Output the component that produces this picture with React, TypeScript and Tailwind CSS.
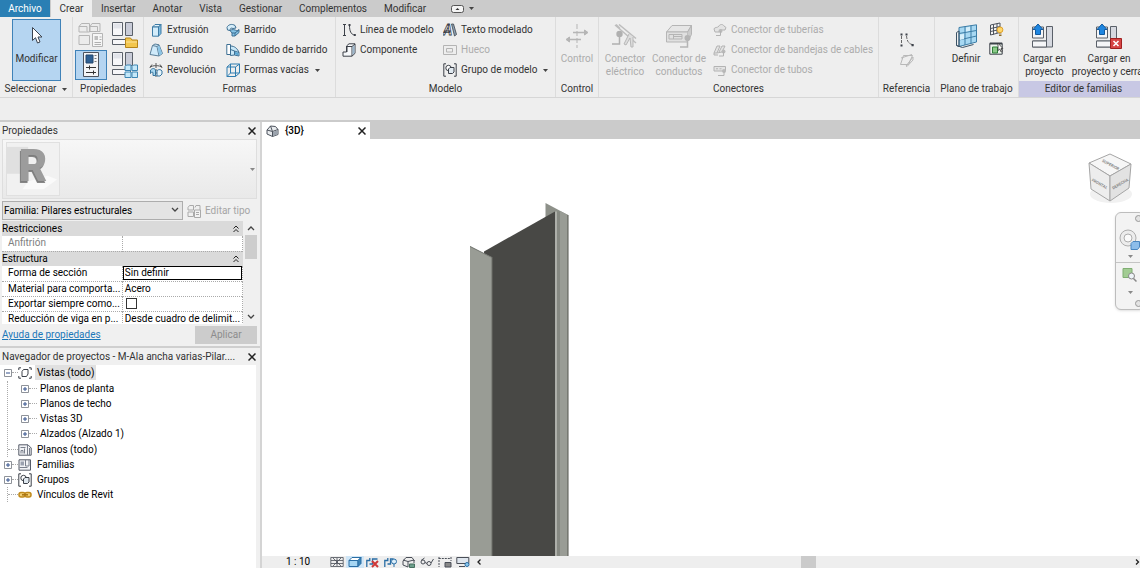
import React, { useState } from 'react';
import clsx from 'clsx';

type IconProps = { w: number; h: number; className?: string; children: React.ReactNode };

const Svg = ({ w, h, className, children }: IconProps) => (
  <svg
    width={w}
    height={h}
    viewBox={`0 0 ${w} ${h}`}
    fill="none"
    stroke="#4a4f58"
    aria-hidden="true"
    className={clsx('shrink-0', className)}
  >
    {children}
  </svg>
);

/* ---------- ribbon icons, 14px ---------- */

const ExtrusionIcon = () => (
  <Svg w={14} h={14}>
    <path d="M3.500 4 6 1.500h6L9.500 4z" fill="#e3f3fc" stroke="#3d7ba5" />
    <path d="M3.500 4h6v9.200h-6z" fill="#d3ecfa" stroke="#3d7ba5" />
    <path d="M9.500 4 12 1.500v9L9.500 13.200z" fill="#7fbbe0" stroke="#3d7ba5" />
  </Svg>
);

const BlendIcon = () => (
  <Svg w={14} h={14}>
    <path d="M3.500 2.500 6 1l4 .8 3.500 8.700L10 13 1 11.500z" fill="#cfeafa" stroke="#5b7f99" />
    <path d="M3.500 2.500 8 3.500 10 2M8 3.500 10 13" stroke="#5b7f99" />
    <path d="M8.500 4 10.300 2.500 13 10.500 10.300 12.500z" fill="#8cc5e6" stroke="none" />
  </Svg>
);

const RevolveIcon = () => (
  <Svg w={14} h={14}>
    <path d="M1 4.500C3 2 11 2 13 4.500M3 1.500.8 4.500M11 1.500l2.200 3" stroke="#555" />
    <path d="M7 0v14" stroke="#555" strokeDasharray="2 1" />
    <path d="M1.500 7c2-2 4-2 5 0v5.500H4V9.500c-1-.8-2.500 0-2.500 1z" fill="#a9d8f1" stroke="#35739d" />
    <path d="M8 7.500c2-1.500 4-1 5 .5v3l-2 2H8z" fill="#e6f4fb" stroke="#35739d" />
  </Svg>
);

const SweepIcon = () => (
  <Svg w={14} h={14}>
    <path d="M1 4.500C2 1.500 6 .5 9 2.500l1 2.500-3 .5C5 4.500 4 5.500 4 7.500L1.500 7z" fill="#d7eefa" stroke="#3d6f93" />
    <path d="M4 7.500c2-1.500 5-1 7 .5l2-1.500v3l-4 3.500H6V10z" fill="#86c3e6" stroke="#3d6f93" />
    <path d="M6 10h3v3M9 10l4-3" stroke="#3d6f93" />
  </Svg>
);

const SweptBlendIcon = () => (
  <Svg w={14} h={14}>
    <path d="M.8 1.500h3.700v10H.8z" fill="#fff" stroke="#3d6f93" />
    <path d="M4.500 3c4 0 7 2.500 8.500 6.500v3.500L8.500 12l-4 .5z" fill="#c9e8f8" stroke="#3d6f93" />
    <path d="M8.500 8 13 9.500M8.500 8v4M4.500 6.500l4 1.500" stroke="#3d6f93" />
    <path d="M9 8.800 12.500 10v2.300L9 11.500z" fill="#58a5d2" stroke="none" />
  </Svg>
);

const VoidIcon = () => (
  <Svg w={14} h={14}>
    <path d="M1 4h8.500v9.500H1zM1 4l3.500-3h9v9l-4 3.500M9.500 4l4-3M4.500 1v9M4.500 10h9M1 13.500 4.500 10" stroke="#2f7db0" />
  </Svg>
);

const ModelLineIcon = () => (
  <Svg w={14} h={14}>
    <path d="M2.500 2v10M1 1.500h3M1 12.500h3M7.500 2.500C7.500 8 9 11.500 12.500 12" stroke="#3c4149" />
    <path d="M6.500 1h2v2h-2zM11.800 11h2v2h-2z" fill="#3c4149" stroke="none" />
  </Svg>
);

const ComponentIcon = () => (
  <Svg w={14} h={14}>
    <path d="M4.500 3 7 .8h6v9.500L10 13.200H1V9h3.500z" fill="#f7f9fb" stroke="#3c4149" />
    <path d="M10 3.500h-5M10 3.500v9.500M10 3.500 13 1M5 3.500V9" stroke="#3c4149" />
    <path d="M10.500 4 12.500 2v8l-2 2z" fill="#9cb7cd" stroke="none" />
  </Svg>
);

// solid block letter: white front face, shaded right side
const ModelTextIcon = () => (
  <Svg w={14} h={14}>
    <path d="M8.500 1h2l3 10.500L11.500 13z" fill="#8fa3b5" stroke="#3c4149" strokeWidth=".8" />
    <text x="0" y="12" fontSize="14" fontWeight="700" fontStyle="italic" fill="#fff" stroke="#3c4149" strokeWidth=".8">A</text>
  </Svg>
);

const OpeningIcon = () => (
  <Svg w={14} h={14}>
    <path d="M.5 2.500h13v9H.5zM3.500 5.500h6v3.500h-6z" stroke="#b4b4b4" />
  </Svg>
);

const BracketGroupIcon = () => (
  <Svg w={14} h={14}>
    <path d="M3 .8H.8v12.400H3M11 .8h2.200v12.400H11" stroke="#3c4149" />
    <circle cx="5.500" cy="5" r="2.700" fill="#fff" stroke="#3c4149" />
    <path d="M5.500 6 7 4.500h4V9l-1.500 1.500h-4z" fill="#dfe8ef" stroke="#3c4149" />
  </Svg>
);

const PipeIcon = () => (
  <Svg w={14} h={14} className="opacity-60">
    <path d="M1 6c0-2 4-1 5-3s4-2 5 0l2 1.500-1 2.500H7l-1 2H2z" fill="#ddd" stroke="#8c8c8c" />
    <circle cx="7.500" cy="8" r="2" fill="#999" stroke="none" />
    <path d="M7.500 8v4.500H3" stroke="#8c8c8c" />
  </Svg>
);

const TrayIcon = () => (
  <Svg w={14} h={14} className="opacity-60">
    <path d="m1 10 3-7h3L4 10zM6 9l3-6h3L9 9M1 10v2h4M4 10l5-1" fill="#ddd" stroke="#8c8c8c" />
    <circle cx="10.500" cy="8.500" r="2" fill="#999" stroke="none" />
    <path d="M10.500 8.500v4.500H6" stroke="#8c8c8c" />
  </Svg>
);

const ConduitIcon = () => (
  <Svg w={14} h={14} className="opacity-60">
    <path d="M1 3.500h11.500v4.500H1zM3 5.800h2M6.500 5.800h2" fill="#ddd" stroke="#8c8c8c" />
    <circle cx="11" cy="8" r="2" fill="#999" stroke="none" />
    <path d="M11 8v4.500H5" stroke="#8c8c8c" />
  </Svg>
);

/* ---------- properties panel icons ---------- */

const CategoryIcon = () => (
  <Svg w={28} h={28}>
    <g fill="#ececec" stroke="#b5b5b5">
      <path d="M2 5.500 4.500 2.500h8v8.500H2zM13 5.500 15 2.500h8v8H13zM2 14.500h10.500v9H2z" />
      <path d="M2 5.500h8v5.500M13 5.500h7.500v5" />
      <path d="M15.500 12.500h10v13h-10z" fill="#f6f6f6" />
    </g>
    <path d="M17.500 15h3.500v4h-3.500z" fill="#bdbdbd" stroke="none" />
    <path d="M22.500 16h2M22.500 18.500h2M17.500 21.500h6.500M17.500 23.500h6.500" stroke="#b0b0b0" />
  </Svg>
);

const SheetBlocks = () => (
  <>
    <path d="M1.500 1.500h10v13h-10zM1.500 18.500h18v5h-18z" fill="#f7f7f9" stroke="#5a6069" />
    <path d="M14.500 1.500h7v13h-7z" fill="#c9ccd8" stroke="#5a6069" />
    <path d="M2.500 2.500h8v5h-8z" fill="#e2e4ea" stroke="none" />
  </>
);

const TypeFolderIcon = () => (
  <Svg w={28} h={28}>
    <SheetBlocks />
    <path d="M14.500 17h5l1.500 2h5.500v7.500h-12z" fill="#f3c64d" stroke="#b5841a" />
    <path d="M15 21h11" stroke="#fbe29a" />
  </Svg>
);

const FamilyTypesIcon = () => (
  <Svg w={28} h={28}>
    <SheetBlocks />
    <g fill="#c5e8f9" stroke="#3d86b4">
      <path d="M14 15.500 15.500 14h4.500v5.500h-6zM21 15.500 22.500 14h4v5.500H21zM14 21h6v5.500h-6zM21 21h5.500v5.500H21z" />
    </g>
  </Svg>
);

const PropertiesIcon = () => (
  <Svg w={28} h={28}>
    <path d="M6.500 1.500h15v24h-15z" fill="#f4f5f7" stroke="#4c525c" />
    <path d="M9 4h7v8H9z" fill="#2d5f93" stroke="#24496e" />
    <path d="M17.500 4.500h2M17.500 7.500h2M17.500 10.500h2" stroke="#777" />
    <path d="M9 16.500h10M9 21.500h10M12.500 14.500v4M16.500 19.500v4" stroke="#333" />
  </Svg>
);

const CursorIcon = () => (
  <Svg w={12} h={18}>
    <path d="M1.500 1.500v13l3-2.800 2 5.300 2.500-1-2-5h4z" fill="#fff" stroke="#3b4450" />
  </Svg>
);

/* ---------- large icons, 24px high ---------- */

const ControlIcon = () => (
  <Svg w={24} h={24}>
    <path d="M12 0v24" stroke="#b5b5b5" strokeDasharray="5 2" />
    <path d="M8 8.500h13M3 15.500h13" stroke="#b5b5b5" strokeWidth="1.500" />
    <path d="m19.500 6 3.500 2.500-3.500 2.500zM4.500 13 1 15.500 4.500 18z" fill="#b5b5b5" stroke="#b5b5b5" />
  </Svg>
);

const ElectricIcon = () => (
  <Svg w={28} h={24}>
    <path d="M4 1 25 19M8 .5l17 14M5 .5l4 4" stroke="#bdbdbd" strokeWidth="1.500" />
    <path d="m18 10-5 10 2 1 4-7 1 9h2V13" fill="#ddd" stroke="#b8b8b8" />
    <circle cx="8.500" cy="10" r="3.200" fill="#b0b0b0" stroke="none" />
    <path d="M8.500 10v10H1" stroke="#b0b0b0" strokeWidth="1.500" />
  </Svg>
);

const DuctIcon = () => (
  <Svg w={28} h={24}>
    <path d="M1.500 8 7 1.500h19.500l-4 6.500z" fill="#e6e6e6" stroke="#b5b5b5" />
    <path d="M1.500 8h21v10h-21zM4 10.500h13V15H4zM8.500 12.500H17M8.500 10.500V15" fill="#e0e0e0" stroke="#b5b5b5" />
    <path d="m22.500 8 4-6.500v9l-4 7" fill="#ccc" stroke="#b5b5b5" />
    <circle cx="22.500" cy="14" r="3" fill="#b5b5b5" stroke="none" />
    <path d="M22.500 14v9H15" stroke="#b5b5b5" strokeWidth="1.500" />
  </Svg>
);

const WorkPlaneIcon = () => (
  <Svg w={24} h={24}>
    <path d="M5 3.500 22.500.8V18L5 22.500z" fill="#a7d8f2" stroke="#3c7da6" />
    <path d="M11 2.500V21M17 1.500V19.500M5 9.500l17.500-3M5 16l17.500-4" stroke="#3c7da6" />
    <path d="M6 10.500 10 10v5l-4 1zM12 3.500l4-.7v4l-4 .8z" fill="#d7effa" stroke="none" />
    <path d="M2.500 8.500 5 7v15.500l-2.500-1zM2.500 21.500l6 2 11-3" stroke="#3c5366" />
  </Svg>
);

const ShowPlaneIcon = () => (
  <Svg w={15} h={15}>
    <path d="M1.500 3 11 1v9.500l-9.500 2.500zM4.500 2.500v10M8 1.500v9.500M1.500 6.500 11 4.500M1.500 9.500 11 7.500" fill="#f5f5f5" stroke="#4c525c" />
    <circle cx="11" cy="7.800" r="2.900" fill="#ffd76a" stroke="#dfa02a" />
    <path d="M10 12h2.500M10 13.500h2.500" stroke="#8a6a2a" />
  </Svg>
);

const ViewerIcon = () => (
  <Svg w={15} h={15}>
    <path d="M.8 2.500h12.400v10.700H.8z" fill="#eef5ee" stroke="#3c4149" />
    <path d="M.8 2.500h12.400" stroke="#3c4149" strokeWidth="2" />
    <path d="M3.500 6h5v6h-5z" fill="#8ccb89" stroke="#2f7f38" />
    <path d="m9 2 0 7.500 1.800-1.500 1.300 3 1.200-.7-1.300-2.800h1.800z" fill="#fff" stroke="#333" strokeWidth=".8" />
  </Svg>
);

const LoadIcon = ({ close = false }: { close?: boolean }) => (
  <Svg w={28} h={26}>
    <path d="M15.500 3.500h6V24h-20v-6h14z" fill="#d6d9e0" stroke="#5a6069" />
    <path d="M1.500 4h11v11h-11zM1.500 18h14v6h-14z" fill="#f5f6f8" stroke="#5a6069" />
    <path d="M7 1l5 5.500H9.500v5h-5v-5H2z" fill="#1f86e0" stroke="#125a9f" />
    {close && (
      <>
        <path d="M15.500 15.500h11v10h-11z" fill="#d64545" stroke="#a02020" />
        <path d="m18.500 18 5 5M23.500 18l-5 5" stroke="#fff" strokeWidth="1.500" />
      </>
    )}
  </Svg>
);

const RefLineIcon = () => (
  <Svg w={16} h={14}>
    <path d="M2.500 3v8M7.500 3C8 8 9.500 10.500 13 11.500" stroke="#666" strokeDasharray="3 1" />
    <path d="M1.500.5h2v2h-2zM1.500 11.500h2v2h-2zM6.500.5h2v2h-2zM12.500 11h2.200v2.200h-2.200z" fill="#3c4149" stroke="none" />
  </Svg>
);

const RefPlaneIcon = () => (
  <Svg w={16} h={14}>
    <path d="M4.500 2.500h9l-4 9h-8zM2 5 13 1.500M7 13l7-9v3l-6 6.500z" stroke="#b8b8b8" />
  </Svg>
);

/* ---------- ribbon building blocks ---------- */

const RibbonGroup = ({ title, width, highlight, children }: {
  title: React.ReactNode;
  width: string;
  highlight?: boolean;
  children: React.ReactNode;
}) => (
  <section className={clsx('flex shrink-0 flex-col border-r border-[#dcdcdc]', width)}>
    <div className="flex h-16 items-start">{children}</div>
    <h2 className={clsx('flex h-4 items-center justify-center whitespace-nowrap', highlight && 'bg-[#c8c8e4]')}>
      {title}
    </h2>
  </section>
);

const SmallButton = ({ icon, label, menu, disabled }: {
  icon: React.ReactNode;
  label: string;
  menu?: boolean;
  disabled?: boolean;
}) => (
  <button
    type="button"
    disabled={disabled}
    className="flex h-5 items-center gap-1 whitespace-nowrap disabled:text-[#acacac]"
  >
    {icon}
    {label}
    {menu && <Caret className="ml-0.5" />}
  </button>
);

const LargeButton = ({ icon, lines, width, disabled }: {
  icon: React.ReactNode;
  lines: string[];
  width: string;
  disabled?: boolean;
}) => (
  <button
    type="button"
    disabled={disabled}
    className={clsx('flex shrink-0 flex-col items-center pt-1.5 leading-[13px] whitespace-nowrap disabled:text-[#acacac]', width)}
  >
    <span className="mb-1 flex h-[25px] items-center">{icon}</span>
    {lines.map((line) => (
      <span key={line}>{line}</span>
    ))}
  </button>
);

const Caret = ({ className }: { className?: string }) => (
  <svg width="5" height="3" viewBox="0 0 5 3" className={className} aria-hidden="true">
    <path d="M0 0h5L2.500 3z" fill="#444" />
  </svg>
);

const CloseIcon = () => (
  <Svg w={8} h={8}>
    <path d="m.5.5 7 7M7.500.5l-7 7" stroke="#222" strokeWidth="1.500" />
  </Svg>
);

const TABS = ['Insertar', 'Anotar', 'Vista', 'Gestionar', 'Complementos', 'Modificar'];

const TabStrip = () => (
  <nav className="flex h-[17px] shrink-0 items-stretch gap-px bg-[#cbcbcb]">
    <button type="button" className="w-[50px] bg-[#2a7fb4] text-white">Archivo</button>
    <button type="button" className="w-[41px] bg-[#eee]">Crear</button>
    {TABS.map((tab) => (
      <button type="button" key={tab} className="px-2">{tab}</button>
    ))}
    <button type="button" aria-label="Minimizar cinta" className="ml-4 flex items-center gap-1">
      <Svg w={14} h={8}>
        <rect x=".5" y=".5" width="12" height="7" rx="2" fill="#f4f4f4" stroke="#555" />
        <path d="M4.500 5 6.500 3l2 2z" fill="#333" stroke="none" />
      </Svg>
      <Caret />
    </button>
  </nav>
);

const Ribbon = () => (
  <div className="flex shrink-0 overflow-hidden border-b border-[#d6d6d6]">
    <RibbonGroup width="w-[73px]" title={<>Seleccionar<Caret className="ml-1.5" /></>}>
      <button
        type="button"
        className="mt-0.5 ml-3 flex h-[62px] w-[49px] flex-col items-center border border-[#3f82b8] bg-[#b5d5f1] pt-1.5"
      >
        <CursorIcon />
        <span className="mt-2">Modificar</span>
      </button>
    </RibbonGroup>

    <RibbonGroup width="w-[71px]" title="Propiedades">
      <div className="grid grid-cols-2 gap-x-0.5 px-0.5 pt-0.5">
        <button type="button" disabled aria-label="Categoría y parámetros" className="flex h-[31px] w-8 items-center justify-center"><CategoryIcon /></button>
        <button type="button" aria-label="Tipo de familia" className="flex h-[31px] w-8 items-center justify-center"><TypeFolderIcon /></button>
        <button type="button" aria-label="Propiedades" className="flex h-[30px] w-8 items-center justify-center border border-[#3f82b8] bg-[#b5d5f1]"><PropertiesIcon /></button>
        <button type="button" aria-label="Tipos de familia" className="flex h-[30px] w-8 items-center justify-center"><FamilyTypesIcon /></button>
      </div>
    </RibbonGroup>

    <RibbonGroup width="w-[192px]" title="Formas">
      <div className="w-[76px] pt-[3px] pl-[5px]">
        <SmallButton icon={<ExtrusionIcon />} label="Extrusión" />
        <SmallButton icon={<BlendIcon />} label="Fundido" />
        <SmallButton icon={<RevolveIcon />} label="Revolución" />
      </div>
      <div className="pt-[3px] pl-1.5">
        <SmallButton icon={<SweepIcon />} label="Barrido" />
        <SmallButton icon={<SweptBlendIcon />} label="Fundido de barrido" />
        <SmallButton icon={<VoidIcon />} label="Formas vacías" menu />
      </div>
    </RibbonGroup>

    <RibbonGroup width="w-[220px]" title="Modelo">
      <div className="w-[101px] pt-[3px] pl-1.5">
        <SmallButton icon={<ModelLineIcon />} label="Línea de modelo" />
        <SmallButton icon={<ComponentIcon />} label="Componente" />
      </div>
      <div className="pt-[3px] pl-1.5">
        <SmallButton icon={<ModelTextIcon />} label="Texto modelado" />
        <SmallButton icon={<OpeningIcon />} label="Hueco" disabled />
        <SmallButton icon={<BracketGroupIcon />} label="Grupo de modelo" menu />
      </div>
    </RibbonGroup>

    <RibbonGroup width="w-[43px]" title="Control">
      <LargeButton width="w-[42px]" icon={<ControlIcon />} lines={['Control']} disabled />
    </RibbonGroup>

    <RibbonGroup width="w-[280px]" title="Conectores">
      <LargeButton width="w-[52px]" icon={<ElectricIcon />} lines={['Conector', 'eléctrico']} disabled />
      <LargeButton width="w-[56px]" icon={<DuctIcon />} lines={['Conector de', 'conductos']} disabled />
      <div className="pt-[3px] pl-1.5">
        <SmallButton icon={<PipeIcon />} label="Conector de tuberías" disabled />
        <SmallButton icon={<TrayIcon />} label="Conector de bandejas de cables" disabled />
        <SmallButton icon={<ConduitIcon />} label="Conector de tubos" disabled />
      </div>
    </RibbonGroup>

    <RibbonGroup width="w-14" title="Referencia">
      <div className="flex w-full flex-col items-center gap-1.5 pt-4">
        <button type="button" aria-label="Línea de referencia"><RefLineIcon /></button>
        <button type="button" aria-label="Plano de referencia"><RefPlaneIcon /></button>
      </div>
    </RibbonGroup>

    <RibbonGroup width="w-[84px]" title="Plano de trabajo">
      <LargeButton width="w-[46px] ml-2" icon={<WorkPlaneIcon />} lines={['Definir']} />
      <div className="flex flex-col gap-1 pt-[5px]">
        <button type="button" aria-label="Mostrar"><ShowPlaneIcon /></button>
        <button type="button" aria-label="Visor"><ViewerIcon /></button>
      </div>
    </RibbonGroup>

    <RibbonGroup width="w-[130px]" title="Editor de familias" highlight>
      <LargeButton width="w-[51px]" icon={<LoadIcon />} lines={['Cargar en', 'proyecto']} />
      <LargeButton width="w-[78px]" icon={<LoadIcon close />} lines={['Cargar en', 'proyecto y cerrar']} />
    </RibbonGroup>
  </div>
);

/* ---------- properties palette ---------- */

const DoubleChevron = () => (
  <Svg w={6} h={8}>
    <path d="m.5 3.500 2.500-2.500 2.500 2.500M.5 7 3 4.500 5.500 7" stroke="#222" />
  </Svg>
);

const Chevron = ({ up }: { up?: boolean }) => (
  <Svg w={8} h={6} className={up ? 'rotate-180' : undefined}>
    <path d="m1 1 3 3 3-3" stroke="#444" strokeWidth="1.300" />
  </Svg>
);

const SectionRow = ({ title }: { title: string }) => (
  <tr className="h-[15px] bg-[#dadada]">
    <th colSpan={2} className="p-0 pr-1 text-left font-normal">
      <div className="flex items-center justify-between">{title}<DoubleChevron /></div>
    </th>
  </tr>
);

const ParamRow = ({ name, muted, children }: { name: string; muted?: boolean; children?: React.ReactNode }) => (
  <tr className="h-[15px] border-b border-dotted border-[#aaa]">
    <th scope="row" className={clsx('border-r border-dotted border-[#aaa] p-0 pl-1.5 text-left font-normal whitespace-nowrap', muted && 'text-[#808080]')}>
      {name}
    </th>
    <td className="border-r border-dotted border-[#aaa] p-0 whitespace-nowrap">{children}</td>
  </tr>
);

const PropertiesPalette = () => {
  const [shape, setShape] = useState('Sin definir');
  const [exported, setExported] = useState(false);

  return (
    <section className="shrink-0 pr-[3px] pl-0.5 text-black">
      <header className="flex h-[17px] items-center justify-between pr-px text-[#333]">
        <h2>Propiedades</h2>
        <button type="button" aria-label="Cerrar propiedades"><CloseIcon /></button>
      </header>

      <div className="flex h-[60px] items-center justify-between border border-[#dedede] bg-linear-to-b from-[#f7f7f7] to-[#e9e9e9] pr-px pl-[3px]">
        <svg width="54" height="54" viewBox="0 0 54 54" className="border border-[#e0e0e0]" aria-hidden="true">
          <rect width="54" height="54" fill="#f1f1f1" />
          <path d="M0 4h22v28H0z" fill="#e0e0e0" />
          <path d="m22 40 20-6 10 4-14 10H16z" fill="#fafafa" />
          <text x="12" y="39" fontSize="46" fontWeight="900" fill="#9c9c9c" className="drop-shadow-[-1px_2px_0_#7d7d7d]">R</text>
        </svg>
        <Caret className="opacity-60" />
      </div>

      <div className="mt-0.5 flex h-[19px] items-center">
        <div className="relative w-[181px]">
          <select
            aria-label="Familia"
            className="h-[19px] w-full appearance-none border border-[#adadad] bg-[#e4e4e4] pl-px outline-none"
          >
            <option>Familia: Pilares estructurales</option>
          </select>
          <span className="pointer-events-none absolute top-1.5 right-1"><Chevron /></span>
        </div>
        <button type="button" disabled className="ml-1 flex items-center gap-1 text-[#a5a5a5]">
          <Svg w={14} h={14}>
            <path d="M1 3.500 2.500 1.500h4v4.500H1zM8 3.500 9 1.500h4V6M1 8h5.500v4.500H1z" stroke="#aaa" />
            <path d="M7.500 6h6v7.500h-6zM9 8.500h3M9 10.500h3" fill="#f3f3f3" stroke="#aaa" />
          </Svg>
          Editar tipo
        </button>
      </div>

      <div className="mt-px flex h-[103px]">
        <div className="w-[242px] overflow-hidden bg-white">
          <table className="w-full table-fixed border-collapse leading-[14px]">
            <tbody>
              <SectionRow title="Restricciones" />
              <ParamRow name="Anfitrión" muted />
              <SectionRow title="Estructura" />
              <ParamRow name="Forma de sección">
                <input
                  type="text"
                  aria-label="Forma de sección"
                  value={shape}
                  onChange={(e) => setShape(e.target.value)}
                  className="block h-[14px] w-full border border-black px-px outline-none"
                />
              </ParamRow>
              <ParamRow name="Material para comporta..."><span className="pl-0.5">Acero</span></ParamRow>
              <ParamRow name="Exportar siempre como...">
                <input
                  type="checkbox"
                  aria-label="Exportar siempre como"
                  checked={exported}
                  onChange={(e) => setExported(e.target.checked)}
                  className="ml-[3px] block size-[11px] appearance-none border border-[#333] bg-white checked:bg-[#333]"
                />
              </ParamRow>
              <ParamRow name="Reducción de viga en p..."><span className="pl-0.5">Desde cuadro de delimit...</span></ParamRow>
            </tbody>
          </table>
        </div>
        <div className="ml-0.5 flex w-3 flex-col items-center justify-between py-1">
          <Chevron up />
          <div className="mt-1 mb-auto h-6 w-full bg-[#cdcdcd]" />
          <Chevron />
        </div>
      </div>

      <footer className="flex h-[22px] items-center justify-between">
        <a href="#ayuda" className="text-[#1a76b8] underline">Ayuda de propiedades</a>
        <button type="button" disabled className="h-[18px] w-[62px] bg-[#ccc] text-[#8c8c8c]">Aplicar</button>
      </footer>
    </section>
  );
};

/* ---------- project browser ---------- */

const Toggle = ({ open }: { open?: boolean }) => (
  <Svg w={8} h={8}>
    <path d="M.5.5h7v7h-7z" fill="#fff" stroke="#8e9299" />
    <path d={open ? 'M2 4h4' : 'M2 4h4M4 2v4'} stroke="#33508c" />
  </Svg>
);

const Branch = ({ width }: { width: string }) => <span className={clsx('border-t border-dotted border-[#aaa]', width)} />;

const ViewsIcon = () => (
  <Svg w={14} h={12}>
    <path d="M3 .8H.8V3M.8 9v2.200H3M11 .8h2.200V3M13.200 9v2.200H11M4 4.500 5.500 2.500h4.500V7L8.500 9.500H4z" stroke="#3c4149" />
  </Svg>
);

const SheetsIcon = () => (
  <Svg w={14} h={12}>
    <path d="M.8.8H10L13.200 4v7.200H.8z" fill="#f2f3f6" stroke="#565c68" />
    <path d="M2.500 3.500h5M3 9.500V6.500h2v3M6.500 9.500v-5M9.500 1v10M11.500 4v7" stroke="#7a808c" />
  </Svg>
);

const FamiliesIcon = () => (
  <Svg w={14} h={12}>
    <path d="M1 .8h11.500v10.400H1z" fill="#f2f3f6" stroke="#565c68" />
    <path d="M7.500 1v6H11V1M1.500 8.500h8" stroke="#7a808c" />
    <path d="M2.500 2.500h3.500v4H2.500z" fill="#9aa0ae" stroke="none" />
  </Svg>
);

const LinkIcon = () => (
  <Svg w={14} h={8}>
    <rect x="1" y="1.500" width="6" height="4.500" rx="2" fill="#f0cf75" stroke="#c08a1c" strokeWidth="1.500" />
    <rect x="7" y="1.500" width="6" height="4.500" rx="2" fill="#f0cf75" stroke="#c08a1c" strokeWidth="1.500" />
    <path d="M4 3.800h6" stroke="#a87412" strokeWidth="1.500" />
  </Svg>
);

const VIEW_FOLDERS = ['Planos de planta', 'Planos de techo', 'Vistas 3D', 'Alzados (Alzado 1)'];

const ROOT_NODES = [
  { label: 'Planos (todo)', icon: <SheetsIcon />, expandable: false },
  { label: 'Familias', icon: <FamiliesIcon />, expandable: true },
  { label: 'Grupos', icon: <BracketGroupIcon />, expandable: true },
  { label: 'Vínculos de Revit', icon: <LinkIcon />, expandable: false },
];

const TreeRow = ({ children }: { children: React.ReactNode }) => (
  <div className="flex h-[15px] items-center whitespace-nowrap">{children}</div>
);

const ProjectBrowser = () => (
  <section className="flex min-h-0 flex-1 flex-col border-t-2 border-[#cfcfcf] pr-1 text-black">
    <header className="flex h-[17px] shrink-0 items-center justify-between pl-0.5 text-[#333]">
      <h2 className="whitespace-nowrap">Navegador de proyectos - M-Ala ancha varias-Pilar....</h2>
      <button type="button" aria-label="Cerrar navegador"><CloseIcon /></button>
    </header>
    <ul className="min-h-0 flex-1 overflow-hidden bg-white pl-1">
      <li>
        <TreeRow>
          <Toggle open />
          <Branch width="w-1.5" />
          <ViewsIcon />
          <span className="ml-[3px] bg-[#e0e0e0] px-0.5 leading-[15px]">Vistas (todo)</span>
        </TreeRow>
        <ul className="my-px ml-[3px] border-l border-dotted border-[#aaa] pl-[13px]">
          {VIEW_FOLDERS.map((folder) => (
            <li key={folder}>
              <TreeRow>
                <Toggle />
                <Branch width="w-2" />
                <span className="pl-[3px]">{folder}</span>
              </TreeRow>
            </li>
          ))}
        </ul>
      </li>
      {ROOT_NODES.map((node) => (
        <li key={node.label}>
          <TreeRow>
            {node.expandable ? (
              <><Toggle /><Branch width="w-1.5" /></>
            ) : (
              <span className="ml-[3px] flex w-[11px] items-center self-stretch border-l border-dotted border-[#aaa]"><Branch width="w-full" /></span>
            )}
            {node.icon}
            <span className="ml-[5px]">{node.label}</span>
          </TreeRow>
        </li>
      ))}
    </ul>
  </section>
);

/* ---------- drawing area ---------- */

const HouseIcon = () => (
  <Svg w={13} h={12}>
    <path d="M1 5 4.500 1l5 .5L12 4.500v5L6.500 11.500 1 9z" fill="#e8ebee" stroke="#4c525c" />
    <path d="m1 5 5.500 1.500L12 4.500M6.500 6.500v5M6.500 6.500 4.500 1" stroke="#4c525c" />
    <path d="m7 7 4.500-2v4.500L7 11z" fill="#9ba3ad" stroke="none" />
  </Svg>
);

// H-section column seen in perspective
const SteelColumn = () => (
  <svg width="99" height="353" viewBox="0 0 99 353" className="absolute bottom-0 left-[208px]" aria-label="Pilar" role="img">
    <path d="M75.500 0 98 12v341H75.500z" fill="#8d9089" />
    <path d="M14 48.500 85 8.500V353H14z" fill="#484845" />
    <path d="M85 8.500h2V353h-2z" fill="#adafa9" />
    <path d="M87 8.500h3V353h-3z" fill="#868982" />
    <path d="m90 8 8 4v341h-8z" fill="#999c95" />
    <path d="M98 12v341" stroke="#55564f" />
    <path d="m0 43 22 11.500V353H0z" fill="#999c95" />
    <path d="M22 54v299" stroke="#6c6e69" />
    <path d="m0 43.500 22 11" stroke="#777a74" />
  </svg>
);

const ViewCube = () => (
  <svg width="50" height="54" viewBox="0 0 50 54" className="absolute top-[13px] right-[5px]" role="img" aria-label="ViewCube">
    <ellipse cx="26" cy="42" rx="21" ry="9" fill="#f1f1f1" />
    <path d="m25 2 21 10-21 12L4 11z" fill="#f6f6f6" stroke="#a5a5a5" />
    <path d="M4 11 25 24v25L6 37z" fill="#ededed" stroke="#a5a5a5" />
    <path d="M46 12 25 24v25l19-13z" fill="#e2e2e2" stroke="#a5a5a5" />
    <g fontSize="4" fontWeight="700" fill="#8b8b8b" textAnchor="middle">
      <text transform="translate(14 33) rotate(30)">FRONTAL</text>
      <text transform="translate(36 33) rotate(-30)">DERECHA</text>
      <text transform="translate(25 14) rotate(28)">SUPERIOR</text>
    </g>
  </svg>
);

const NavigationBar = () => (
  <div className="absolute top-[73px] right-[-5px] flex h-[98px] w-[30px] flex-col items-center rounded-md border border-[#bdbdbd] bg-[#f3f3f3] pt-4 shadow-sm">
    <button type="button" aria-label="Rueda de navegación">
      <Svg w={22} h={22}>
        <circle cx="9" cy="9" r="8" fill="#ececec" stroke="#adadad" />
        <circle cx="9" cy="9" r="4" fill="#fafafa" stroke="#adadad" />
        <path d="M12 14.500 14 12.500h6.500v5.500L18.500 20.500H12z" fill="#8dbdea" stroke="#4a86c0" />
      </Svg>
    </button>
    <Caret className="mt-1 opacity-60" />
    <div className="my-1 w-full border-t border-[#c4c4c4]" />
    <button type="button" aria-label="Zoom">
      <Svg w={16} h={16}>
        <path d="M1 1.500h9v9H1z" fill="#a2cc93" stroke="#7fae72" />
        <circle cx="9.500" cy="9" r="3" fill="#eef4f8" stroke="#888" />
        <path d="m11.500 11.500 3 3" stroke="#888" strokeWidth="1.500" />
      </Svg>
    </button>
    <Caret className="mt-2 opacity-60" />
    <span className="absolute top-0.5 right-0.5 size-[7px] rounded-full border border-[#999] bg-[#e3e3e3]" />
    <span className="absolute right-0.5 bottom-0.5 size-[7px] rounded-full border border-[#999] bg-[#e3e3e3]" />
  </div>
);

const VIEW_CONTROLS = [
  { name: 'Nivel de detalle', art: <path d="M.8 1.500h12.400v9H.8zM1 4.500h12M1 7.500h12M3 2l8 8M11 2 3 10M7 2v8" strokeWidth=".8" /> },
  { name: 'Estilo visual', active: true, art: <><path d="m1 4.500 3-3h9l-3 3z" fill="#fff" stroke="#2a6ea5" /><path d="M1 4.500h9v6H1z" fill="#a6d6f3" stroke="#2a6ea5" /><path d="m10 4.500 3-3v6l-3 3z" fill="#3f86b8" stroke="#2a6ea5" /></> },
  { name: 'Camino de sol', art: <><path d="M.8 11V4.500h3V2M3.500 8h3V3h5" stroke="#2a6ea5" strokeWidth="1.300" /><path d="m6 5 6 6M12 5l-6 6" stroke="#cf3838" strokeWidth="2" /></> },
  { name: 'Sombras', art: <><path d="M.8 11V4.500h3V2M3.500 8h3V3h3" stroke="#2a6ea5" strokeWidth="1.300" /><circle cx="10" cy="5.500" r="2.500" fill="#dceefa" stroke="#2a6ea5" /><path d="M10 8v3" stroke="#2a6ea5" /></> },
  { name: 'Bloquear vista', art: <><path d="M1 5 4 1.500h6L12.500 5M1 5v4l5 2V5.500L1 4M6 5.500 12 4v3" fill="#eee" /><path d="M7.500 8h5v3.500h-5z" fill="#6d9f8c" stroke="#47705f" /></> },
  { name: 'Ocultar', art: <><circle cx="3" cy="6" r="2" /><circle cx="9" cy="7.500" r="2" /><path d="M1 4.500 4.500 2M5 6.500l2 1M11 7l2.500-4" /></> },
  { name: 'Cotas', art: <><path d="M1 1v10M.8 2.500h11M13 1v4" strokeDasharray="2 1" /><path d="M7 6.500h6v4.500H7z" fill="#888" /></> },
  { name: 'Restricciones', art: <><path d="M.8 1.500h12v6H.8z" fill="#dfe6ee" /><path d="M3 10.500h6" /><circle cx="11" cy="8.500" r="2" fill="#8cc8ee" stroke="#2a6ea5" /></> },
];

const StatusBar = () => (
  <footer className="flex h-3 shrink-0 items-center overflow-hidden bg-[#eee]">
    <span className="w-[66px] pl-6 whitespace-nowrap text-black">1 : 10</span>
    <div className="flex">
      {VIEW_CONTROLS.map(({ name, active, art }) => (
        <button type="button" key={name} aria-label={name} className={clsx('flex w-[18px] justify-center', active && 'bg-[#cfe6f7]')}>
          <Svg w={14} h={12}>{art}</Svg>
        </button>
      ))}
    </div>
    <Svg w={6} h={8} className="ml-1"><path d="M4.500 1.500 2 4l2.500 2.500" stroke="#222" strokeWidth="1.300" /></Svg>
    <div className="flex h-full flex-1 justify-center">
      <div className="h-full w-[15px] bg-[#cbcbcb]" />
    </div>
    <Svg w={6} h={8}><path d="M2 1.500 4.500 4 2 6.500" stroke="#222" strokeWidth="1.300" /></Svg>
  </footer>
);

const DrawingArea = () => (
  <main className="flex min-w-0 flex-1 flex-col">
    <div className="flex h-[17px] shrink-0 bg-[#cbcbcb]">
      <div className="flex w-[108px] items-center bg-white pr-1 pl-1">
        <HouseIcon />
        <span className="ml-1.5 font-medium text-black">{'{3D}'}</span>
        <button type="button" aria-label="Cerrar vista" className="ml-auto"><CloseIcon /></button>
      </div>
    </div>
    <div className="relative min-h-0 flex-1 overflow-hidden bg-white">
      <SteelColumn />
      <ViewCube />
      <NavigationBar />
    </div>
    <StatusBar />
  </main>
);

export default function App() {
  return (
    <div className="flex h-screen flex-col overflow-hidden bg-[#eee] font-['Roboto','Open_Sans',sans-serif] text-[10px] leading-[14px] text-[#333]">
      <TabStrip />
      <Ribbon />
      <div className="h-6 shrink-0 border-b-2 border-[#cbcbcb]" />
      <div className="flex min-h-0 flex-1">
        <aside className="flex w-[262px] shrink-0 flex-col border-r-2 border-[#d4d4d4] bg-[#f0f0f0]">
          <PropertiesPalette />
          <ProjectBrowser />
        </aside>
        <DrawingArea />
      </div>
    </div>
  );
}
